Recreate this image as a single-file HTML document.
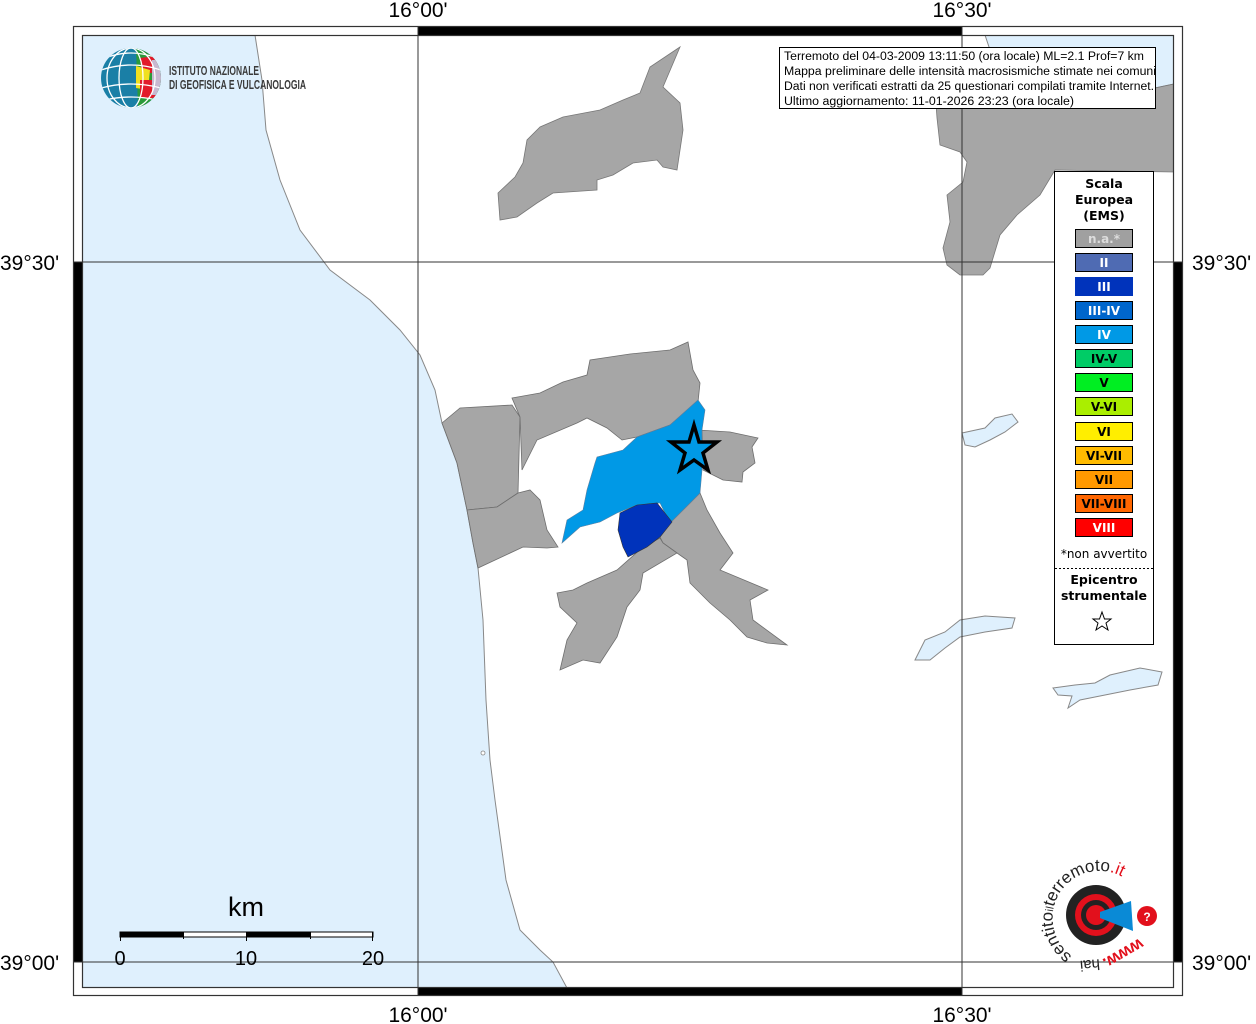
<!DOCTYPE html>
<html><head><meta charset="utf-8"><style>
html,body{margin:0;padding:0;background:#fff;}
body{width:1256px;height:1024px;position:relative;overflow:hidden;font-family:"Liberation Sans",sans-serif;}
svg{position:absolute;left:0;top:0;}
.lbl{font-family:"Liberation Sans",sans-serif;font-size:21px;fill:#000;}
</style></head><body>
<svg width="1256" height="1024" viewBox="0 0 1256 1024" xmlns="http://www.w3.org/2000/svg">
<rect x="0" y="0" width="1256" height="1024" fill="#fff"/>
<path d="M82,35 L255,35 L262,80 L266,130 L280,180 L300,230 L330,270 L370,300 L400,330 L420,355 L435,390 L442,423 L457,463 L467,510 L473,543 L478,568 L483,620 L486,700 L490,760 L495,800 L506,880 L520,930 L540,950 L553,962 L567,988 L82,988 Z" fill="#dff0fd" stroke="#888" stroke-width="1"/>
<circle cx="483" cy="753" r="2" fill="#fff" stroke="#888" stroke-width="0.8"/>
<path d="M985,35 L1174,35 L1174,84 L1155,88 L1060,85 L1000,72 L990,50 Z" fill="#dff0fd" stroke="#888" stroke-width="1"/>
<path d="M935,90 L1000,88 L1060,85 L1155,88 L1174,84 L1174,172 L1055,170 L1040,195 L1017,215 L1000,235 L990,268 L983,275 L960,275 L947,265 L943,248 L950,222 L947,195 L963,182 L967,162 L960,152 L940,145 L937,118 Z" fill="#a6a6a6" stroke="#777" stroke-width="0.8"/>
<path d="M500,220 L498,193 L515,177 L523,163 L527,140 L540,127 L563,117 L600,110 L623,100 L640,93 L650,67 L680,47 L663,87 L680,103 L683,130 L677,170 L663,167 L657,160 L633,163 L613,175 L597,180 L597,190 L553,193 L537,203 L517,217 Z" fill="#a6a6a6" stroke="#777" stroke-width="0.8"/>
<g fill="#a6a6a6" stroke="#6e6e6e" stroke-width="0.8">
<path d="M442,423 L460,408 L512,405 L520,417 L518,493 L497,507 L467,510 L457,463 Z"/>
<path d="M512,398 L540,393 L563,382 L587,375 L590,360 L630,354 L670,350 L688,342 L693,370 L700,383 L698,402 L670,425 L637,437 L622,440 L607,428 L587,418 L577,423 L537,440 L527,460 L522,470 L520,417 Z"/>
<path d="M467,510 L497,507 L518,493 L530,490 L540,500 L547,530 L558,547 L547,548 L523,547 L478,568 L473,543 Z"/>
<path d="M698,430 L730,432 L758,438 L752,447 L755,463 L743,472 L742,482 L723,480 L703,470 L702,430 Z"/>
<path d="M670,523 L683,510 L700,493 L707,510 L720,533 L733,553 L720,570 L768,590 L750,600 L753,620 L787,645 L767,643 L747,637 L730,620 L710,603 L690,583 L687,560 L677,553 L663,543 L660,537 Z"/>
<path d="M557,593 L573,590 L587,583 L617,570 L643,547 L660,538 L663,543 L677,553 L643,573 L640,590 L627,607 L617,637 L600,663 L583,660 L560,670 L567,640 L577,623 L560,607 Z"/>
</g>
<path d="M562,543 L567,520 L583,510 L587,490 L595,463 L597,457 L623,450 L637,437 L670,425 L698,400 L705,410 L702,430 L702,470 L700,493 L683,510 L670,523 L660,503 L637,505 L617,513 L600,522 L580,527 Z" fill="#0099e6" stroke="#5a7fa0" stroke-width="0.6"/>
<path d="M620,513 L637,505 L657,503 L672,522 L660,537 L647,547 L628,557 L623,547 L618,530 Z" fill="#0033bb" stroke="#333" stroke-width="0.6"/>
<g fill="#dff0fd" stroke="#888" stroke-width="1">
<path d="M962,433 L985,428 L995,418 L1012,414 L1018,422 L1005,432 L990,440 L975,447 L965,445 Z"/>
<path d="M915,660 L925,640 L945,632 L960,620 L985,616 L1015,618 L1012,628 L985,632 L960,637 L945,648 L930,660 Z"/>
<path d="M1053,688 L1075,685 L1095,683 L1110,675 L1140,668 L1162,672 L1158,685 L1130,690 L1105,695 L1080,700 L1068,708 L1072,696 L1058,695 Z"/>
</g>
<polygon points="694,425 699,442 717,442 703,453 708,470 694,460 680,470 685,453 671,442 689,442" fill="#0099e6" stroke="#000" stroke-width="3.5" stroke-linejoin="miter"/>
<g stroke="#333" stroke-width="1">
<line x1="418" y1="26" x2="418" y2="996"/>
<line x1="962" y1="26" x2="962" y2="996"/>
<line x1="73" y1="262" x2="1183" y2="262"/>
<line x1="73" y1="962" x2="1183" y2="962"/>
</g>
<rect x="82" y="26" width="1092" height="9" fill="#fff"/>
<rect x="82" y="988" width="1092" height="8" fill="#fff"/>
<rect x="73" y="26" width="9" height="970" fill="#fff"/>
<rect x="1174" y="26" width="9" height="970" fill="#fff"/>
<rect x="418" y="26" width="544" height="9" fill="#000"/>
<rect x="418" y="988" width="544" height="8" fill="#000"/>
<rect x="73" y="262" width="9" height="700" fill="#000"/>
<rect x="1174" y="262" width="9" height="700" fill="#000"/>
<g fill="none" stroke="#333" stroke-width="1.2">
<rect x="73.5" y="26.5" width="1109" height="969"/>
<rect x="82.5" y="35.5" width="1091" height="952"/>
</g>
<g stroke="#333" stroke-width="1">
<line x1="418" y1="26" x2="418" y2="35"/><line x1="962" y1="26" x2="962" y2="35"/>
<line x1="418" y1="988" x2="418" y2="996"/><line x1="962" y1="988" x2="962" y2="996"/>
<line x1="73" y1="262" x2="82" y2="262"/><line x1="73" y1="962" x2="82" y2="962"/>
<line x1="1174" y1="262" x2="1183" y2="262"/><line x1="1174" y1="962" x2="1183" y2="962"/>
</g>
<text class="lbl" x="418" y="17" text-anchor="middle">16°00'</text>
<text class="lbl" x="962" y="17" text-anchor="middle">16°30'</text>
<text class="lbl" x="418" y="1022" text-anchor="middle">16°00'</text>
<text class="lbl" x="962" y="1022" text-anchor="middle">16°30'</text>
<text class="lbl" x="0" y="270">39°30'</text>
<text class="lbl" x="0" y="970">39°00'</text>
<text class="lbl" x="1192" y="270">39°30'</text>
<text class="lbl" x="1192" y="970">39°00'</text>
<text x="246" y="916" text-anchor="middle" font-size="27" font-family="Liberation Sans">km</text>
<rect x="120" y="932" width="253" height="5" fill="#fff" stroke="#000" stroke-width="1"/>
<rect x="120" y="932" width="63" height="5" fill="#000"/>
<rect x="246" y="932" width="64" height="5" fill="#000"/>
<g stroke="#000" stroke-width="1"><line x1="120.5" y1="932" x2="120.5" y2="941"/><line x1="246.5" y1="932" x2="246.5" y2="941"/><line x1="372.5" y1="932" x2="372.5" y2="941"/><line x1="183.5" y1="932" x2="183.5" y2="939"/><line x1="310.5" y1="932" x2="310.5" y2="939"/></g>
<g font-size="20" font-family="Liberation Sans" text-anchor="middle"><text x="120" y="965">0</text><text x="246" y="965">10</text><text x="373" y="965">20</text></g>
<defs><clipPath id="gc"><circle cx="131" cy="78" r="30"/></clipPath></defs>
<g clip-path="url(#gc)">
<rect x="100" y="47" width="62" height="62" fill="#1a7fa6"/>
<path d="M136,48 L162,48 L162,108 L138,108 Z" fill="#2a9a3a"/>
<path d="M140,58 L155,56 L160,72 L142,74 Z" fill="#e21a2a"/>
<path d="M136,66 L150,70 L148,90 L136,88 Z" fill="#f0e020"/>
<path d="M140,80 L156,80 L156,98 L140,98 Z" fill="#e21a2a"/>
<path d="M152,60 L162,60 L162,95 L152,95 Z" fill="#c8b8d0"/>
<g stroke="#fff" stroke-width="1.3" fill="none">
<ellipse cx="131" cy="78" rx="12" ry="30"/><ellipse cx="131" cy="78" rx="24" ry="30"/>
<path d="M101,70 Q131,60 161,70"/><path d="M101,88 Q131,80 161,88"/><path d="M105,58 Q131,48 157,58"/><path d="M105,100 Q131,94 157,100"/>
</g>
</g>
<g font-family="Liberation Sans" font-size="12.5" font-weight="bold" fill="#3a3a3a"><text x="169" y="75" textLength="90" lengthAdjust="spacingAndGlyphs">ISTITUTO NAZIONALE</text><text x="169" y="89" textLength="137" lengthAdjust="spacingAndGlyphs">DI GEOFISICA E VULCANOLOGIA</text></g>
<rect x="779.5" y="47.5" width="376" height="61" fill="#fff" stroke="#000" stroke-width="1"/>
<g font-family="Liberation Sans" font-size="11.5" fill="#000"><text x="784" y="60" textLength="360" lengthAdjust="spacingAndGlyphs">Terremoto del 04-03-2009 13:11:50 (ora locale) ML=2.1 Prof=7 km</text><text x="784" y="75" textLength="372" lengthAdjust="spacingAndGlyphs">Mappa preliminare delle intensità macrosismiche stimate nei comuni</text><text x="784" y="90" textLength="370" lengthAdjust="spacingAndGlyphs">Dati non verificati estratti da 25 questionari compilati tramite Internet.</text><text x="784" y="105" textLength="290" lengthAdjust="spacingAndGlyphs">Ultimo aggiornamento: 11-01-2026 23:23 (ora locale)</text></g>
<rect x="1054.5" y="171.5" width="99" height="473" fill="#fff" stroke="#000" stroke-width="1"/>
<g font-family="DejaVu Sans" font-weight="bold" font-size="12.5" text-anchor="middle" fill="#000"><text x="1104" y="188">Scala</text><text x="1104" y="204">Europea</text><text x="1104" y="220">(EMS)</text></g>
<g font-family="DejaVu Sans" font-weight="bold" font-size="12" text-anchor="middle" stroke="#000" stroke-width="1">
<rect x="1075.5" y="229.5" width="57" height="18" fill="#a0a0a0"/><text x="1104" y="243" fill="#ddd" stroke="none">n.a.*</text>
<rect x="1075.5" y="253.5" width="57" height="18" fill="#4f6bb3"/><text x="1104" y="267" fill="#fff" stroke="none">II</text>
<rect x="1075.5" y="277.5" width="57" height="18" fill="#0033bb" stroke="#0033bb"/><text x="1104" y="291" fill="#fff" stroke="none">III</text>
<rect x="1075.5" y="301.5" width="57" height="18" fill="#0066cc"/><text x="1104" y="315" fill="#fff" stroke="none">III-IV</text>
<rect x="1075.5" y="325.5" width="57" height="18" fill="#0099e6"/><text x="1104" y="339" fill="#fff" stroke="none">IV</text>
<rect x="1075.5" y="349.5" width="57" height="18" fill="#00cc66"/><text x="1104" y="363" fill="#000" stroke="none">IV-V</text>
<rect x="1075.5" y="373.5" width="57" height="18" fill="#00ee22"/><text x="1104" y="387" fill="#000" stroke="none">V</text>
<rect x="1075.5" y="397.5" width="57" height="18" fill="#aaee00"/><text x="1104" y="411" fill="#000" stroke="none">V-VI</text>
<rect x="1075.5" y="422.5" width="57" height="18" fill="#ffee00"/><text x="1104" y="436" fill="#000" stroke="none">VI</text>
<rect x="1075.5" y="446.5" width="57" height="18" fill="#ffbb00"/><text x="1104" y="460" fill="#000" stroke="none">VI-VII</text>
<rect x="1075.5" y="470.5" width="57" height="18" fill="#ff9900"/><text x="1104" y="484" fill="#000" stroke="none">VII</text>
<rect x="1075.5" y="494.5" width="57" height="18" fill="#ff6600"/><text x="1104" y="508" fill="#000" stroke="none">VII-VIII</text>
<rect x="1075.5" y="518.5" width="57" height="18" fill="#ff0000"/><text x="1104" y="532" fill="#fff" stroke="none">VIII</text>
</g>
<text x="1104" y="558" font-family="DejaVu Sans" font-size="12" text-anchor="middle">*non avvertito</text>
<line x1="1055" y1="568.5" x2="1153" y2="568.5" stroke="#000" stroke-dasharray="2,2"/>
<g font-family="DejaVu Sans" font-weight="bold" font-size="12.5" text-anchor="middle"><text x="1104" y="584">Epicentro</text><text x="1104" y="600">strumentale</text></g>
<polygon points="1102,612 1104.5,619 1111,619 1106,623 1108,630 1102,626 1096,630 1098,623 1093,619 1099.5,619" fill="#fff" stroke="#000" stroke-width="1"/>
<circle cx="1096" cy="915" r="30" fill="#222"/>
<circle cx="1096" cy="915" r="21" fill="#e2101c"/>
<circle cx="1096" cy="915" r="15" fill="#222"/>
<circle cx="1096" cy="915" r="10" fill="#e2101c"/>
<path d="M1100,912 L1131,901 L1133,931 L1100,918 Z" fill="#0a8ad6"/>
<circle cx="1147" cy="916" r="10" fill="#e2101c"/>
<text x="1147" y="921" font-size="12" font-weight="bold" fill="#fff" text-anchor="middle" font-family="Liberation Sans">?</text>
<defs><path id="arc" d="M1072,956 A47,47 0 1 1 1143,900"/></defs>
<text font-family="Liberation Sans" font-size="17" fill="#222"><textPath href="#arc">sentito<tspan font-size="11">il</tspan>terremoto<tspan fill="#e2101c">.it</tspan></textPath></text>
<text x="1124" y="962" font-family="Liberation Sans" font-size="17" fill="#e2101c" font-weight="bold" transform="rotate(150 1124 955)" text-anchor="middle">www.</text>
<text x="1090" y="970" font-family="Liberation Sans" font-size="15" fill="#222" transform="rotate(175 1090 965)" text-anchor="middle">hai</text>
</svg>
</body></html>
